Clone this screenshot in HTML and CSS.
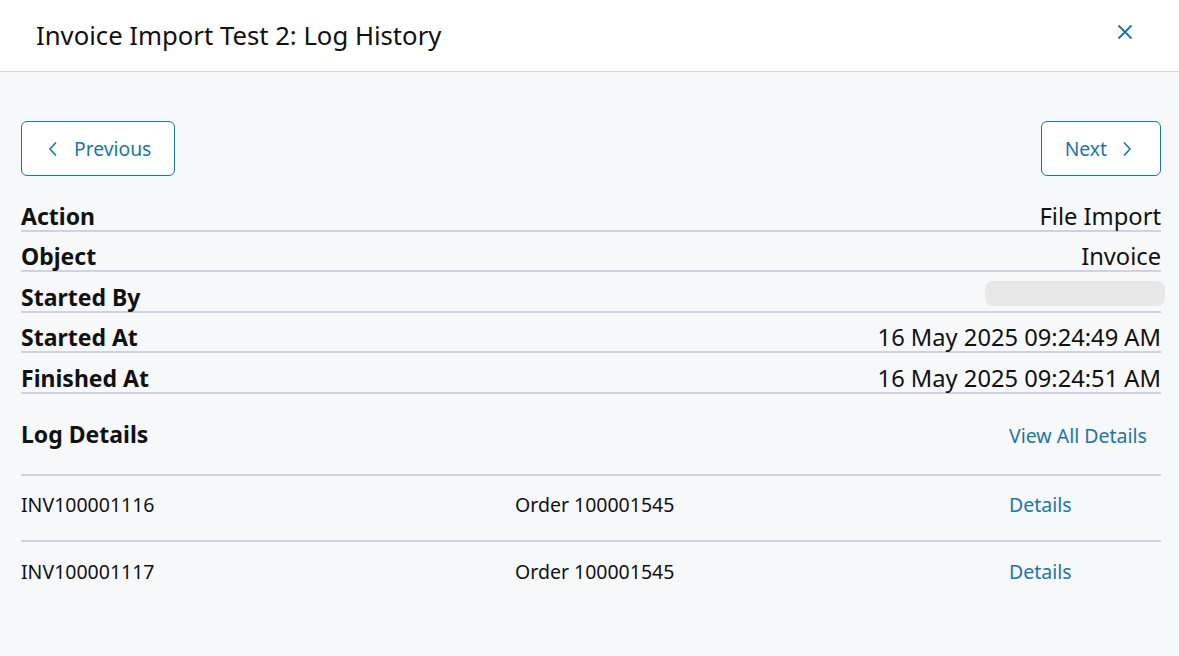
FILE: index.html
```html
<!DOCTYPE html>
<html>
<head>
<meta charset="utf-8">
<link rel="stylesheet" href="styles.css">
</head>
<body>
<div class="modal">
  <header class="header">
    <h1 class="title">Invoice Import Test 2: Log History</h1>
    <button class="close" aria-label="Close">
      <svg width="16" height="16" viewBox="0 0 16 16"><path d="M1.5 1.5 L14.5 14.5 M14.5 1.5 L1.5 14.5" stroke="#1d76a4" stroke-width="2" fill="none"/></svg>
    </button>
  </header>
  <main class="body">
    <div class="nav">
      <button class="btn prev"><svg class="chev" width="10" height="16" viewBox="0 0 10 16"><path d="M8 1.5 L2 8 L8 14.5" stroke="#1d76a4" stroke-width="1.6" fill="none"/></svg>Previous</button>
      <button class="btn next">Next<svg class="chev" width="10" height="16" viewBox="0 0 10 16"><path d="M2 1.5 L8 8 L2 14.5" stroke="#1d76a4" stroke-width="1.6" fill="none"/></svg></button>
    </div>
    <dl class="info">
      <div class="row"><dt>Action</dt><dd>File Import</dd></div>
      <div class="row"><dt>Object</dt><dd>Invoice</dd></div>
      <div class="row"><dt>Started By</dt><dd><span class="blur"></span></dd></div>
      <div class="row"><dt>Started At</dt><dd>16 May 2025 09:24:49 AM</dd></div>
      <div class="row"><dt>Finished At</dt><dd>16 May 2025 09:24:51 AM</dd></div>
    </dl>
    <div class="log-head">
      <h2 class="log-title">Log Details</h2>
      <a class="link view-all">View All Details</a>
    </div>
    <div class="log-row"><span>INV100001116</span><span>Order 100001545</span><a class="link">Details</a></div>
    <div class="log-row"><span>INV100001117</span><span>Order 100001545</span><a class="link">Details</a></div>
  </main>
</div>
</body>
</html>
```
FILE: styles.css
```css
* { box-sizing: border-box; }
html, body { margin: 0; padding: 0; }
body {
  font-family: "Noto Sans", "Open Sans", sans-serif;
  color: #111;
  background: #f7f8fa;
  width: 1179px;
  height: 656px;
  overflow: hidden;
}
.header {
  height: 72px;
  background: #fff;
  border-bottom: 1px solid #d3d6df;
  display: flex;
  align-items: center;
  justify-content: space-between;
  padding: 0 46px 0 36px;
}
.title {
  margin: 0;
  font-size: 25.7px;
  font-weight: 400;
  line-height: 1;
}
.close {
  background: none;
  border: 0;
  padding: 0;
  display: flex;
  margin-top: -8px;
}
.body {
  padding: 49px 18px 0 21px;
}
.nav {
  display: flex;
  justify-content: space-between;
  margin-bottom: 15px;
}
.btn {
  height: 55px;
  border: 1px solid #1d76a4;
  border-radius: 6px;
  background: #fff;
  color: #1d76a4;
  font-family: inherit;
  font-size: 19.3px;
  display: flex;
  align-items: center;
  gap: 16px;
}
.prev { padding: 0 23px 0 26px; }
.next { padding: 0 28px 0 23px; gap: 15px; }
.info { margin: 0; }
.row {
  display: flex;
  justify-content: space-between;
  align-items: flex-end;
  height: 40.5px;
  border-bottom: 2px solid #cfd3e1;
}
.row dt {
  font-weight: 700;
  font-size: 23px;
  line-height: 27px;
}
.row dd {
  margin: 0;
  font-size: 23.7px;
  line-height: 27px;
}
.blur {
  display: inline-block;
  width: 180px;
  height: 25px;
  background: #e8e8e9;
  border-radius: 8px;
  margin-right: -4px;
  vertical-align: 0;
}
.log-head {
  display: grid;
  grid-template-columns: 988px 1fr;
  align-items: center;
  height: 82px;
  border-bottom: 2px solid #cfd3e1;
}
.log-title {
  margin: 0;
  font-size: 23px;
  font-weight: 700;
}
.link { color: #1d76a4; font-size: 19.5px; }
.view-all { padding-top: 4px; }
.log-row {
  display: grid;
  grid-template-columns: 494px 494px 1fr;
  align-items: center;
  height: 66px;
  font-size: 19.5px;
  padding-bottom: 7px;
  border-bottom: 2px solid #cfd3e1;
}
.log-row:last-child { border-bottom: 0; }
```
